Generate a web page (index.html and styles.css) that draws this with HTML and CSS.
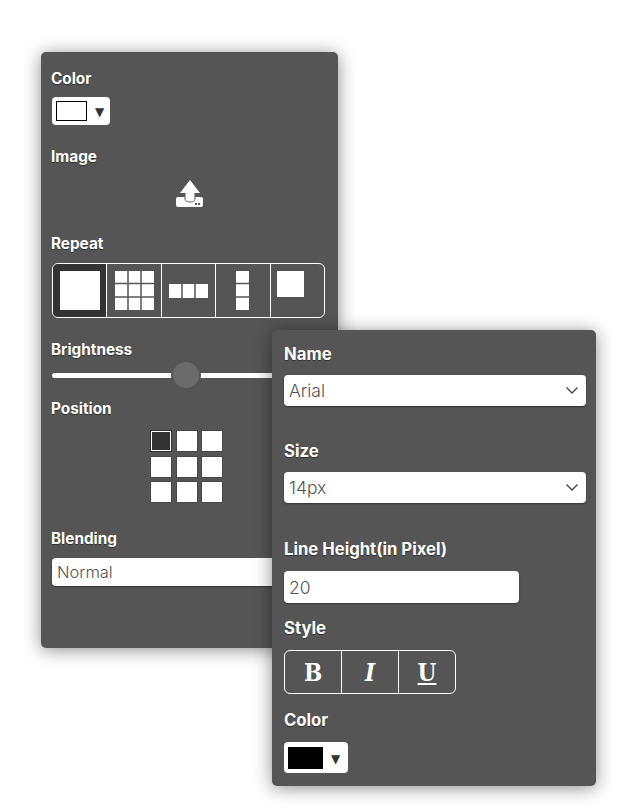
FILE: index.html
```html
<!DOCTYPE html>
<html lang="en">
<head>
<meta charset="utf-8">
<title>Style panels</title>
<link rel="stylesheet" href="styles.css">
</head>
<body>
<div class="canvas">
  <section class="panel panel-back">
    <div class="label">Color</div>
    <div class="swatch swatch-light">
      <span class="chip chip-white"></span><span class="caret">▼</span>
    </div>
    <div class="label label-image">Image</div>
    <div class="upload">
      <svg width="28" height="28" viewBox="0 0 28 28">
        <path d="M2 17h23a2 2 0 0 1 2 2v6a2 2 0 0 1-2 2H2a2 2 0 0 1-2-2v-6a2 2 0 0 1 2-2z" fill="#fff"/>
        <path d="M8.500 17v2a5.500 3.500 0 0 0 11 0v-2z" fill="#555"/>
        <path d="M14 0l10 13h-5.500v6.500a4.500 2 0 0 1-9 0V13H4z" fill="#fff"/>
        <rect x="19" y="23" width="2" height="2" fill="#555"/><rect x="22" y="23" width="2" height="2" fill="#555"/>
      </svg>
    </div>
    <div class="label label-repeat">Repeat</div>
    <div class="group group-repeat">
      <div class="cell cell-active"><svg width="40" height="39"><rect width="40" height="39" fill="#fff"/></svg></div>
      <div class="cell"><svg width="39" height="39"><rect width="39" height="39" fill="#fff"/><path d="M13 0v39M26 0v39M0 12.500h39M0 26h39" stroke="#555" stroke-width="1.500"/></svg></div>
      <div class="cell"><svg width="39" height="14"><rect width="39" height="14" fill="#fff"/><path d="M13 0v14M26 0v14" stroke="#555" stroke-width="1.500"/></svg></div>
      <div class="cell"><svg width="13" height="39"><rect width="13" height="39" fill="#fff"/><path d="M0 12.500h13M0 26h13" stroke="#555" stroke-width="1.500"/></svg></div>
      <div class="cell cell-top"><svg class="top-icon" width="27" height="26"><rect width="27" height="26" fill="#fff"/></svg></div>
    </div>
    <div class="label label-bright">Brightness</div>
    <div class="slider"><span class="thumb"></span></div>
    <div class="label label-position">Position</div>
    <div class="pos-grid">
      <span class="pos pos-active"></span><span class="pos"></span><span class="pos"></span>
      <span class="pos"></span><span class="pos"></span><span class="pos"></span>
      <span class="pos"></span><span class="pos"></span><span class="pos"></span>
    </div>
    <div class="label label-blend">Blending</div>
    <div class="field field-blend">Normal</div>
  </section>

  <section class="panel panel-front">
    <div class="label">Name</div>
    <div class="field field-select field-name">Arial
      <svg class="chev" width="12" height="7" viewBox="0 0 12 7"><path d="M.5.5l5.500 5.500 5.500-5.500" fill="none" stroke="#444" stroke-width="1.300"/></svg>
    </div>
    <div class="label label-size">Size</div>
    <div class="field field-select field-name">14px
      <svg class="chev" width="12" height="7" viewBox="0 0 12 7"><path d="M.5.5l5.500 5.500 5.500-5.500" fill="none" stroke="#444" stroke-width="1.300"/></svg>
    </div>
    <div class="label label-lh">Line Height(in Pixel)</div>
    <div class="field field-input">20</div>
    <div class="label label-style">Style</div>
    <div class="group group-style">
      <div class="cell style-b">B</div>
      <div class="cell style-i">I</div>
      <div class="cell style-u">U</div>
    </div>
    <div class="label label-color2">Color</div>
    <div class="swatch swatch-dark">
      <span class="chip chip-black"></span><span class="caret">▼</span>
    </div>
  </section>
</div>
</body>
</html>
```

FILE: styles.css
```css
* { box-sizing: border-box; }
html, body { margin: 0; padding: 0; background: #fff; }
body { font-family: Inter, "Open Sans", sans-serif; }
.canvas { position: relative; width: 636px; height: 810px; overflow: hidden; }
.panel {
  position: absolute;
  background: #555;
  border-radius: 5px;
  box-shadow: 0 2px 18px rgba(0, 0, 0, .45);
}
.panel-back { left: 41px; top: 52px; width: 297px; height: 596px; padding: 16px 13px 0 11px; }
.panel-front { left: 272px; top: 330px; width: 324px; height: 456px; padding: 14px 10px 0 12px; }
.label {
  height: 20px;
  line-height: 22px;
  font-size: 15.3px;
  font-weight: 700;
  color: #fff;
  white-space: nowrap;
  text-shadow: 0 1px 1px rgba(0, 0, 0, .45);
  margin-left: -1px;
}
.panel-front .label { font-size: 16.7px; line-height: 21px; margin-left: 0; }
.swatch {
  margin-top: 9px;
  width: 58px;
  height: 28px;
  background: #fff;
  border-radius: 4px;
  display: flex;
  align-items: center;
  padding-left: 4px;
  gap: 8px;
}
.chip { display: block; width: 31px; height: 20px; border: 1px solid #000; }
.chip-white { background: #fff; }
.chip-black { background: #000; width: 35px; height: 22px; }
.swatch-dark { margin-top: 12px; width: 64px; height: 31px; }
.caret { font-family: "DejaVu Sans", sans-serif; font-size: 12px; color: #333; line-height: 1; padding-top: 2px; }
.label-image { margin-top: 21px; }
.upload { margin-top: 14px; height: 28px; padding-left: 124px; }
.upload svg { display: block; }
.label-repeat { margin-top: 25px; }
.group {
  display: flex;
  border: 1px solid #fff;
  border-radius: 6px;
  overflow: hidden;
}
.group-repeat { margin-top: 10px; width: 273px; height: 55px; }
.cell {
  flex: 1 1 0;
  display: flex;
  align-items: center;
  justify-content: center;
  border-left: 1px solid #fff;
}
.cell:first-child { border-left: 0; }
.cell svg { display: block; }
.cell-active { background: #333; }
.cell-top { align-items: flex-start; justify-content: flex-start; }
.top-icon { margin: 7px 0 0 6px; }
.label-bright { margin-top: 21px; }
.slider {
  position: relative;
  margin-top: 3px;
  height: 26px;
  width: 250px;
  display: flex;
  align-items: center;
}
.slider::before { content: ""; display: block; width: 100%; height: 5px; border-radius: 3px 0 0 3px; background: #fff; }
.thumb {
  position: absolute;
  left: 121px;
  top: 0;
  width: 26px;
  height: 26px;
  border-radius: 50%;
  background: #6b6b6b;
  box-shadow: 0 0 0 2px #555;
}
.label-position { margin-top: 10px; }
.pos-grid {
  margin: 13px 0 0 99px;
  display: grid;
  grid-template-columns: repeat(3, 20px);
  grid-auto-rows: 20px;
  gap: 5.5px;
  width: 71px;
}
.pos { background: #fff; box-shadow: 0 0 0 1px #484848; }
.pos-active { background: #333; border: 1px solid #fff; box-shadow: 0 0 0 1px #333; }
.label-blend { margin-top: 26px; }
.field {
  position: relative;
  background: #fff;
  border-radius: 4px;
  color: #555;
  font-size: 16.5px;
  font-weight: 300;
  padding-left: 5px;
  display: flex;
  align-items: center;
  box-shadow: 0 1px 2px rgba(0, 0, 0, .4);
}
.panel-front .field { font-size: 17.5px; }
.field-blend { margin-top: 10px; width: 273px; height: 28px; }
.field-name { margin-top: 11px; width: 302px; height: 31px; }
.field-select .chev { position: absolute; right: 8px; top: 12px; }
.label-size { margin-top: 35px; }
.label-lh { margin-top: 36px; }
.field-input { margin-top: 12px; width: 235px; height: 32px; }
.label-style { margin-top: 15px; }
.group-style { margin-top: 12px; width: 172px; height: 44px; }
.style-b, .style-i, .style-u {
  font-family: "DejaVu Serif", serif;
  font-stretch: condensed;
  font-size: 24px;
  color: #fff;
  font-weight: 700;
}
.style-i { font-style: italic; }
.style-u { text-decoration: underline; text-decoration-thickness: 2px; text-underline-offset: 2px; }
.label-color2 { margin-top: 16px; }
```
